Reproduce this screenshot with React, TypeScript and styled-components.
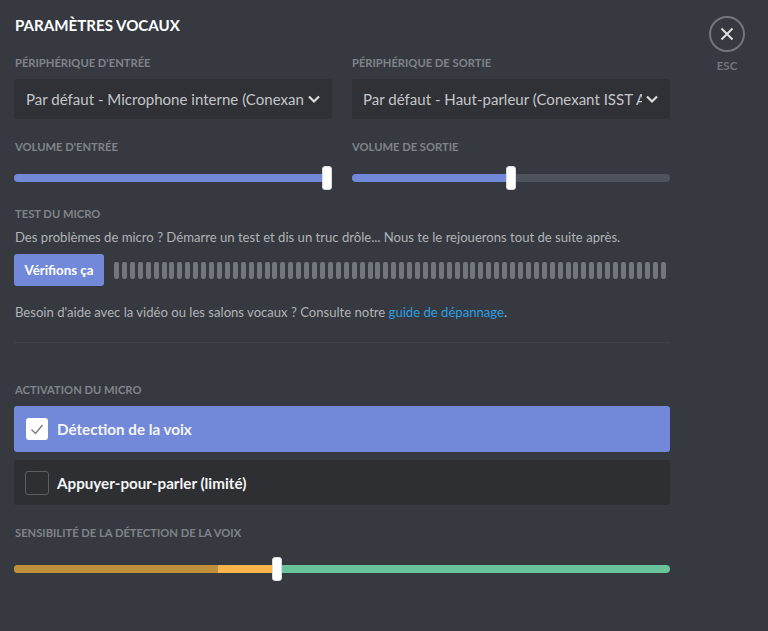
import React from 'react';
import styled, { createGlobalStyle } from 'styled-components';

const Global = createGlobalStyle`
  html, body { margin: 0; padding: 0; background: #36393f; }
  body { font-family: "Lato", "Noto Sans", "Liberation Sans", sans-serif; }
  * { box-sizing: border-box; }
`;

const Page = styled.div`
  width: 768px;
  height: 631px;
  background: #36393f;
  display: flex;
  align-items: flex-start;
  overflow: hidden;
`;

const Content = styled.main`
  width: 656px;
  margin-left: 14px;
  padding-top: 15px;
  display: flex;
  flex-direction: column;
`;

const Title = styled.h1`
  margin: 0 0 20px 1px;
  height: 20px;
  font-size: 15.1px;
  line-height: 20px;
  font-weight: 700;
  color: #fff;
`;

const Columns = styled.div`
  display: grid;
  grid-template-columns: 318px 318px;
  column-gap: 20px;
`;

const Label = styled.div<{ $flush?: boolean }>`
  font-size: 11.2px;
  line-height: 16px;
  height: 16px;
  font-weight: 700;
  color: #80848a;
  white-space: nowrap;
  padding-left: ${p => (p.$flush ? 0 : 1)}px;
  margin-bottom: 8px;
`;

const Select = styled.div<{ $flush?: boolean }>`
  height: 40px;
  background: #2f3136;
  border-radius: 3px;
  padding: 0 11px 0 ${p => (p.$flush ? 11 : 12)}px;
  display: flex;
  align-items: center;
  gap: 3px;
  margin-bottom: 20px;
`;

const SelectText = styled.span`
  flex: 1;
  min-width: 0;
  overflow: hidden;
  white-space: nowrap;
  font-size: 15.05px;
  color: #c4c6c9;
`;

const SliderWrap = styled.div`
  position: relative;
  height: 8px;
  border-radius: 4px;
  background: #4f545c;
  margin-top: 19px;
`;

const Fill = styled.div`
  height: 100%;
  background: #7289da;
  border-radius: 4px 0 0 4px;
`;

const Thumb = styled.div`
  position: absolute;
  top: -8px;
  width: 10px;
  height: 24px;
  border-radius: 3px;
  background: #fff;
  border: 1px solid #dcddde;
`;

const TestLabel = styled(Label)`
  margin-top: 24px;
  margin-bottom: 6px;
`;

const Desc = styled.p`
  margin: 0;
  padding-left: 1px;
  font-size: 13.1px;
  line-height: 18px;
  height: 18px;
  color: #b1b3b6;
  white-space: nowrap;
`;

const TestRow = styled.div`
  display: flex;
  align-items: center;
  margin-top: 8px;
  height: 32px;
`;

const Button = styled.button`
  width: 90px;
  height: 32px;
  flex: none;
  border: 0;
  border-radius: 3px;
  background: #7289da;
  color: #fff;
  font: 700 13.3px "Lato", "Noto Sans", sans-serif;
  padding: 0;
`;

const Bars = styled.div`
  flex: 1;
  margin: 0 4px 0 10px;
  display: flex;
  justify-content: space-between;
`;

const Bar = styled.span`
  width: 5px;
  height: 17px;
  border-radius: 2px;
  background: #72767d;
`;

const Help = styled(Desc)`
  margin-top: 17px;
`;

const Link = styled.a`
  color: #2b9fe0;
`;

const Divider = styled.hr`
  margin: 21px 0 0;
  border: 0;
  height: 1px;
  background: #3f4248;
`;

const ActivationLabel = styled(Label)`
  margin-top: 39px;
  margin-bottom: 8px;
`;

const Radio = styled.div<{ $active?: boolean }>`
  height: ${p => (p.$active ? 46 : 45)}px;
  border-radius: 3px;
  background: ${p => (p.$active ? '#7289da' : '#2d2f33')};
  display: flex;
  align-items: center;
  padding-left: 11px;
  gap: 8px;
  margin-bottom: 8px;
`;

const Box = styled.span<{ $checked?: boolean }>`
  width: ${p => (p.$checked ? 22 : 24)}px;
  height: ${p => (p.$checked ? 22 : 24)}px;
  margin: 0 ${p => (p.$checked ? 1 : 0)}px;
  border-radius: 3px;
  background: ${p => (p.$checked ? '#fff' : 'transparent')};
  border: ${p => (p.$checked ? 'none' : '1px solid #5b5e63')};
  display: flex;
  align-items: center;
  justify-content: center;
`;

const RadioText = styled.span`
  font-size: 15.2px;
  font-weight: 700;
  color: #f4f5f5;
`;

const SensLabel = styled(Label)`
  margin-top: 12px;
  margin-bottom: 24px;
`;

const SensTrack = styled(SliderWrap)`
  margin-top: 0;
  background: #68c39a;
  display: flex;
`;

const SensDim = styled.div`
  width: 204px;
  background: #bf8f3b;
  border-radius: 4px 0 0 4px;
`;

const SensBright = styled.div`
  width: 54px;
  background: #f9b44c;
`;

const CloseColumn = styled.aside`
  width: 36px;
  margin-left: 39px;
  padding-top: 16px;
  display: flex;
  flex-direction: column;
  align-items: center;
`;

const CloseCircle = styled.div`
  width: 36px;
  height: 36px;
  border-radius: 50%;
  border: 2px solid #72767d;
  display: flex;
  align-items: center;
  justify-content: center;
`;

const Esc = styled.div`
  margin-top: 6px;
  font-size: 11.5px;
  line-height: 16px;
  font-weight: 700;
  color: #72767d;
`;

const Chevron = () => (
  <svg width="14" height="14" viewBox="0 0 14 14" fill="none" style={{ flex: 'none' }}>
    <path d="M2 4.5 L7 9.5 L12 4.5" stroke="#dcddde" strokeWidth="2.2" />
  </svg>
);

const App = () => (
  <Page>
    <Global />
    <Content>
      <Title>PARAMÈTRES VOCAUX</Title>
      <Columns>
        <div>
          <Label>PÉRIPHÉRIQUE D'ENTRÉE</Label>
          <Select>
            <SelectText>Par défaut - Microphone interne (Conexant ISST Audio)</SelectText>
            <Chevron />
          </Select>
          <Label>VOLUME D'ENTRÉE</Label>
          <SliderWrap>
            <Fill style={{ width: '100%' }} />
            <Thumb style={{ left: 308 }} />
          </SliderWrap>
        </div>
        <div>
          <Label $flush>PÉRIPHÉRIQUE DE SORTIE</Label>
          <Select $flush>
            <SelectText>Par défaut - Haut-parleur (Conexant ISST Audio)</SelectText>
            <Chevron />
          </Select>
          <Label $flush>VOLUME DE SORTIE</Label>
          <SliderWrap>
            <Fill style={{ width: 154 }} />
            <Thumb style={{ left: 154 }} />
          </SliderWrap>
        </div>
      </Columns>
      <TestLabel>TEST DU MICRO</TestLabel>
      <Desc>Des problèmes de micro ? Démarre un test et dis un truc drôle... Nous te le rejouerons tout de suite après.</Desc>
      <TestRow>
        <Button>Vérifions ça</Button>
        <Bars>
          {Array.from({ length: 70 }, (_, i) => (
            <Bar key={i} />
          ))}
        </Bars>
      </TestRow>
      <Help>
        Besoin d'aide avec la vidéo ou les salons vocaux ? Consulte notre <Link>guide de dépannage</Link>.
      </Help>
      <Divider />
      <ActivationLabel>ACTIVATION DU MICRO</ActivationLabel>
      <Radio $active>
        <Box $checked>
          <svg width="18" height="18" viewBox="0 0 18 18" fill="none">
            <path d="M3.5 9.5 L7.5 13.5 L14.5 5" stroke="#7d8087" strokeWidth="1.5" />
          </svg>
        </Box>
        <RadioText>Détection de la voix</RadioText>
      </Radio>
      <Radio>
        <Box />
        <RadioText>Appuyer-pour-parler (limité)</RadioText>
      </Radio>
      <SensLabel>SENSIBILITÉ DE LA DÉTECTION DE LA VOIX</SensLabel>
      <SensTrack>
        <SensDim />
        <SensBright />
        <Thumb style={{ left: 258 }} />
      </SensTrack>
    </Content>
    <CloseColumn>
      <CloseCircle>
        <svg width="16" height="16" viewBox="0 0 16 16" fill="none">
          <path d="M2.5 2.5 L13.5 13.5 M13.5 2.5 L2.5 13.5" stroke="#dcddde" strokeWidth="2" />
        </svg>
      </CloseCircle>
      <Esc>ESC</Esc>
    </CloseColumn>
  </Page>
);

export default App;
